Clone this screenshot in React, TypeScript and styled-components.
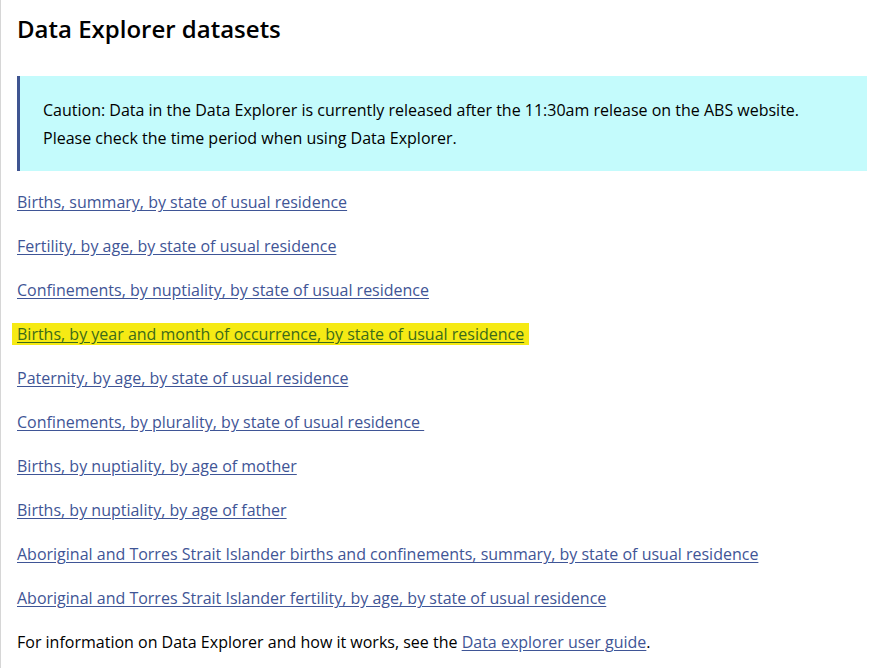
import styled, { createGlobalStyle } from "styled-components";

const GlobalStyle = createGlobalStyle`
    html, body {
        margin: 0;
        padding: 0;
        background: #fff;
    }
    body {
        font-family: "Open Sans", "Liberation Sans", sans-serif;
        font-size: 16px;
        color: #000;
    }
`;

const Page = styled.main`
    min-height: 668px;
    box-sizing: border-box;
    border-left: 1px solid #d6d6d6;
    padding: 13px 8px 20px 16px;
`;

const Heading = styled.h2`
    margin: 0;
    font-size: 24px;
    line-height: 32px;
    font-weight: 600;
    color: #000;
`;

const Callout = styled.div`
    margin-top: 31px;
    background-color: #c4fbfc;
    border-left: 3px solid #3f5591;
    padding: 20px 24px 19px 23px;
    line-height: 28px;

    p {
        margin: 0;
    }
`;

const LinkList = styled.div`
    margin-top: 17px;
    display: flex;
    flex-direction: column;
    gap: 16px;
`;

const Item = styled.p`
    margin: 0;
    line-height: 28px;
`;

const Link = styled.a<{ highlight?: boolean }>`
    color: #3f5596;
    text-decoration: underline;
    text-underline-offset: 2px;
    ${({ highlight }) =>
        highlight &&
        `
        color: #3d6a1a;
        background-color: #f6ea14;
        padding: 0 5px;
        margin-left: -5px;
    `}
`;

const datasets = [
    "Births, summary, by state of usual residence",
    "Fertility, by age, by state of usual residence",
    "Confinements, by nuptiality, by state of usual residence",
    "Births, by year and month of occurrence, by state of usual residence",
    "Paternity, by age, by state of usual residence",
    "Confinements, by plurality, by state of usual residence\u00a0",
    "Births, by nuptiality, by age of mother",
    "Births, by nuptiality, by age of father",
    "Aboriginal and Torres Strait Islander births and confinements, summary, by state of usual residence",
    "Aboriginal and Torres Strait Islander fertility, by age, by state of usual residence",
];

function App() {
    return (
        <Page>
            <GlobalStyle />
            <Heading>Data Explorer datasets</Heading>
            <Callout>
                <p>Caution: Data in the Data Explorer is currently released after the 11:30am release on the ABS website.</p>
                <p>Please check the time period when using Data Explorer.</p>
            </Callout>
            <LinkList>
                {datasets.map((name, i) => (
                    <Item key={name}>
                        <Link href="#" highlight={i === 3}>{name}</Link>
                    </Item>
                ))}
                <Item>
                    For information on Data Explorer and how it works, see the{" "}
                    <Link href="#">Data explorer user guide</Link>.
                </Item>
            </LinkList>
        </Page>
    );
}

export default App;
